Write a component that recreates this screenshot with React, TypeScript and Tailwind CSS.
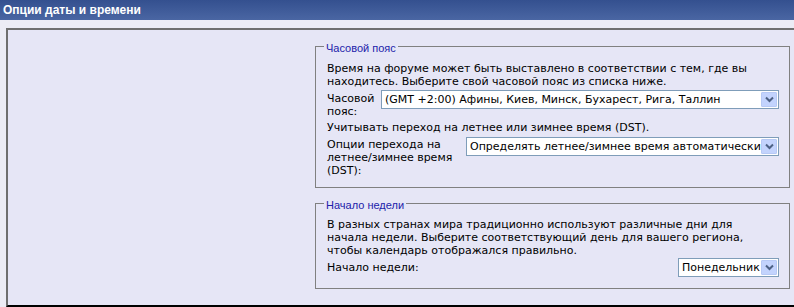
import React from "react";

function Chevron() {
  return (
    <svg width="9" height="7" viewBox="0 0 9 7" className="block">
      <path d="M1 1.5 L4.5 5 L8 1.5" fill="none" stroke="#4d6185" strokeWidth="2" />
    </svg>
  );
}

function FakeSelect({ value, className }: { value: string; className: string }) {
  return (
    <div
      className={
        "h-[19px] flex items-center bg-white border border-[#7f9db9] overflow-hidden shrink-0 " + className
      }
    >
      <span className="flex-1 min-w-0 pl-[3px] whitespace-nowrap overflow-hidden leading-[17px]">{value}</span>
      <span className="w-[16px] h-[15px] mr-[1px] flex items-center justify-center bg-[#c3d3fd] border border-[#b7c9f5] rounded-[1px] shrink-0">
        <Chevron />
      </span>
    </div>
  );
}

export default function App() {
  return (
    <div className="w-[794px] h-[307px] overflow-hidden bg-[#ececf5] font-['DejaVu_Sans',sans-serif] text-[11px] text-black">
      <div className="h-[20px] flex items-center pl-[3px] bg-gradient-to-b from-[#34508f] to-[#4a66a3] text-white font-bold text-[12px] font-['Liberation_Sans',sans-serif]">
        Опции даты и времени
      </div>
      <div className="pt-[8px] pl-[6px]">
        <div className="h-[279px] flex border-l-2 border-t-2 border-b-2 border-l-[#6f6f6f] border-t-[#6f6f6f] border-b-black bg-[#e6e6f6]">
          <div className="w-[307px] shrink-0" />
          <div className="w-[475px] shrink-0 pt-[8px] flex flex-col gap-[7px]">
            <fieldset className="m-0 min-w-0 border border-[#808080] pl-[11px] pr-[10px] pt-[8px] pb-[10px]">
              <legend className="ml-[-3px] px-[2px] pt-[4px] leading-[12px] text-[#2222aa] font-['Liberation_Sans',sans-serif] text-[11px]">
                Часовой пояс
              </legend>
              <p className="leading-[13px] max-w-[440px]">
                Время на форуме может быть выставлено в соответствии с тем, где вы находитесь. Выберите свой часовой пояс из списка ниже.
              </p>
              <div className="mt-[2px] flex items-start">
                <div className="w-[54px] pt-[2px] leading-[13px]">Часовой пояс:</div>
                <FakeSelect className="w-[398px]" value="(GMT +2:00) Афины, Киев, Минск, Бухарест, Рига, Таллин" />
              </div>
              <div className="mt-[3px] leading-[13px]">Учитывать переход на летнее или зимнее время (DST).</div>
              <div className="mt-[3px] flex items-start">
                <div className="w-[139px] pt-[1px] leading-[13px]">Опции перехода на летнее/зимнее время (DST):</div>
                <FakeSelect className="w-[313px]" value="Определять летнее/зимнее время автоматически" />
              </div>
            </fieldset>
            <fieldset className="m-0 min-w-0 border border-[#808080] pl-[11px] pr-[10px] pt-[7px] pb-[11px]">
              <legend className="ml-[-3px] px-[2px] pt-[4px] leading-[12px] text-[#2222aa] font-['Liberation_Sans',sans-serif] text-[11px]">
                Начало недели
              </legend>
              <p className="leading-[13px] max-w-[430px]">
                В разных странах мира традиционно используют различные дни для начала недели. Выберите соответствующий день для вашего региона, чтобы календарь отображался правильно.
              </p>
              <div className="mt-[1px] flex items-center justify-between">
                <div className="leading-[13px]">Начало недели:</div>
                <FakeSelect className="w-[101px]" value="Понедельник" />
              </div>
            </fieldset>
          </div>
        </div>
      </div>
    </div>
  );
}
